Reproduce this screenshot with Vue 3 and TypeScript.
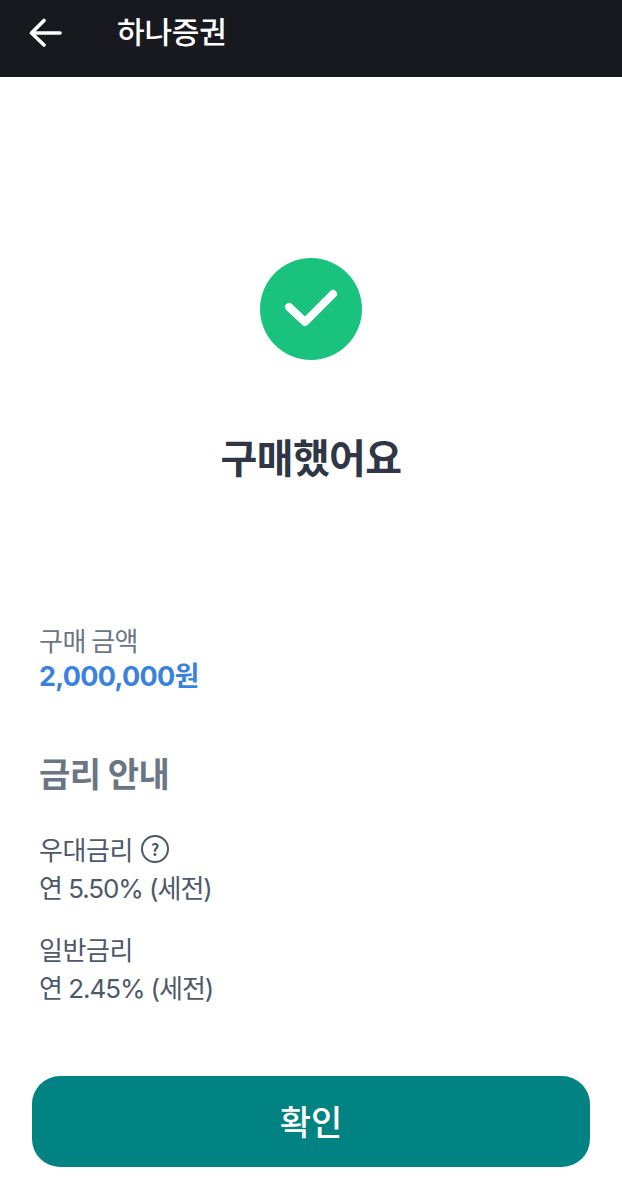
<script setup lang="ts">
const rates = [
  { label: '우대금리', value: '연 5.50% (세전)', help: true },
  { label: '일반금리', value: '연 2.45% (세전)', help: false },
]
</script>

<template>
  <div class="page">
    <header class="bar">
      <svg class="back" width="34" height="30" viewBox="0 0 34 30" fill="none" stroke="#fff" stroke-width="3.6" stroke-linecap="round" stroke-linejoin="round">
        <path d="M31 16H3.5" />
        <path d="M15 3.5 2.5 16 15 28" />
      </svg>
      <span class="title">하나증권</span>
    </header>
    <main class="main">
      <section class="result">
        <svg width="102" height="102" viewBox="0 0 102 102">
          <circle cx="51" cy="51" r="51" fill="#19c37d" />
          <path d="M29 49 45 64 73 36" fill="none" stroke="#fff" stroke-width="8" stroke-linecap="round" stroke-linejoin="round" />
        </svg>
        <h1 class="done">구매했어요</h1>
      </section>
      <section class="amount">
        <div class="amount-label">구매 금액</div>
        <div class="amount-value">2,000,000원</div>
      </section>
      <h2 class="heading">금리 안내</h2>
      <section class="rates">
        <div v-for="r in rates" :key="r.label" class="rate">
          <div class="rate-label">
            {{ r.label }}
            <span v-if="r.help" class="help">?</span>
          </div>
          <div class="rate-value">{{ r.value }}</div>
        </div>
      </section>
    </main>
    <div class="footer">
      <button class="confirm">확인</button>
    </div>
  </div>
</template>

<style scoped>
.page {
  width: 622px;
  height: 1199px;
  display: flex;
  flex-direction: column;
  background: #fff;
  font-family: "Noto Sans CJK KR", Inter, sans-serif;
  overflow: hidden;
}
.bar {
  height: 77px;
  flex: none;
  background: #18191e;
  display: flex;
  align-items: center;
  padding: 0 0 13px 29px;
  box-sizing: border-box;
}
.back { flex: none; }
.title {
  margin-left: 54px;
  margin-bottom: 4px;
  color: #fff;
  font-size: 30px;
  font-weight: 500;
  line-height: 40px;
  letter-spacing: -0.2px;
}
.main {
  flex: 1;
  padding: 0 39px;
}
.result {
  display: flex;
  flex-direction: column;
  align-items: center;
  padding-top: 181px;
}
.done {
  margin: 69px 0 0;
  color: #2f3747;
  font-size: 40px;
  font-weight: 700;
  line-height: 54px;
  letter-spacing: -0.6px;
}
.amount { margin-top: 139px; }
.amount-label {
  color: #6b7684;
  font-size: 26px;
  line-height: 36px;
  letter-spacing: -0.5px;
}
.amount-value {
  color: #3b82dc;
  font-family: Inter, "Noto Sans CJK KR", sans-serif;
  font-size: 27px;
  font-weight: 700;
  line-height: 38px;
  letter-spacing: -0.7px;
}
.heading {
  margin: 54px 0 0;
  color: #6b7684;
  font-size: 34px;
  font-weight: 700;
  line-height: 46px;
  letter-spacing: -0.5px;
}
.rates {
  margin-top: 33px;
  display: flex;
  flex-direction: column;
  gap: 20px;
}
.rate-label {
  display: flex;
  align-items: center;
  gap: 8px;
  color: #4e5968;
  font-size: 26px;
  line-height: 40px;
  letter-spacing: -0.4px;
}
.rate-value {
  color: #4e5968;
  font-family: Inter, "Noto Sans CJK KR", sans-serif;
  font-size: 26px;
  line-height: 40px;
  letter-spacing: -1.05px;
}
.help {
  width: 24px;
  height: 24px;
  border: 2px solid #4e5968;
  border-radius: 50%;
  display: flex;
  align-items: center;
  justify-content: center;
  font-size: 16px;
  font-weight: 700;
  line-height: 1;
  letter-spacing: 0;
}
.footer {
  flex: none;
  padding: 0 32px 32px;
}
.confirm {
  display: block;
  width: 558px;
  height: 91px;
  border: 0;
  border-radius: 28px;
  background: #008382;
  color: #fff;
  font-family: inherit;
  font-size: 34px;
  font-weight: 500;
  padding: 0 0 3px;
}
</style>
